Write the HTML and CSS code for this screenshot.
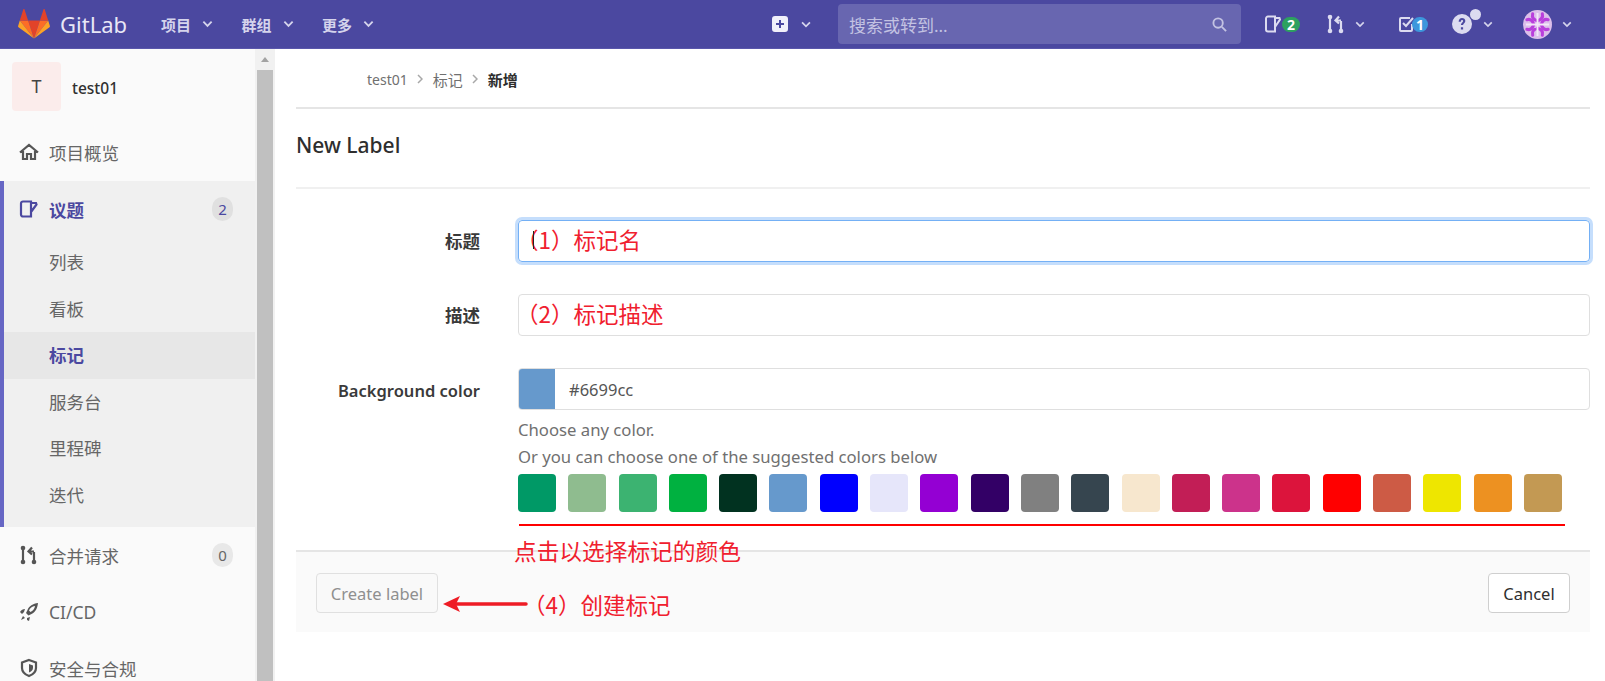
FILE: index.html
```html
<!DOCTYPE html>
<html lang="zh">
<head>
  <meta charset="UTF-8">
  <title>New Label - test01</title>
  <link rel="stylesheet" href="styles.css">
</head>
<body>

<header class="navbar">
  <div class="nav-left">
    <svg class="logo" viewBox="0 0 32 30" width="32" height="30">
      <path fill="#e24329" d="M16 29.5l5.9-18.1H10.1z"/>
      <path fill="#fc6d26" d="M16 29.5L10.1 11.4H1.8z"/>
      <path fill="#fca326" d="M1.8 11.4L.1 16.9c-.2.5 0 1 .4 1.3L16 29.5z"/>
      <path fill="#e24329" d="M1.8 11.4h8.3L6.5.4c-.2-.5-1-.5-1.2 0z"/>
      <path fill="#fc6d26" d="M16 29.5l5.9-18.1h8.3z"/>
      <path fill="#fca326" d="M30.2 11.4l1.7 5.5c.2.5 0 1-.4 1.3L16 29.5z"/>
      <path fill="#e24329" d="M30.2 11.4h-8.3l3.6-11c.2-.5 1-.5 1.2 0z"/>
    </svg>
    <span class="brand">GitLab</span>
    <a class="nav-link">项目<svg class="caret" viewBox="0 0 12 8"><path d="M1.5 1.5L6 6l4.5-4.5"/></svg></a>
    <a class="nav-link">群组<svg class="caret" viewBox="0 0 12 8"><path d="M1.5 1.5L6 6l4.5-4.5"/></svg></a>
    <a class="nav-link">更多<svg class="caret" viewBox="0 0 12 8"><path d="M1.5 1.5L6 6l4.5-4.5"/></svg></a>
  </div>
  <div class="nav-right">
    <div class="nav-icon new-btn">
      <svg viewBox="0 0 16 16" width="16" height="16"><path fill="#f1f0fa" fill-rule="evenodd" d="M3 0h10a3 3 0 0 1 3 3v10a3 3 0 0 1-3 3H3a3 3 0 0 1-3-3V3a3 3 0 0 1 3-3zm4 4v3H4v2h3v3h2V9h3V7H9V4z"/></svg>
      <svg class="caret small" viewBox="0 0 12 8"><path d="M1.5 1.5L6 6l4.5-4.5"/></svg>
    </div>
    <div class="search">
      <span>搜索或转到...</span>
      <svg viewBox="0 0 16 16" width="15" height="15"><circle cx="6.5" cy="6.5" r="5" fill="none" stroke="#c3c2e2" stroke-width="2"/><path d="M10.5 10.5L15 15" stroke="#c3c2e2" stroke-width="2"/></svg>
    </div>
    <div class="nav-icon issues-icon">
      <svg viewBox="0 0 17 18" width="17" height="18"><path fill="none" stroke="#dcdbf0" stroke-width="2" d="M3 1.500h7v15H3a2 2 0 0 1-2-2v-11a2 2 0 0 1 2-2zM10 3h4.500l.5 1.500L10 12"/></svg>
      <span class="pill green">2</span>
    </div>
    <div class="nav-icon mr-icon">
      <svg viewBox="0 0 18 20" width="18" height="20"><g fill="none" stroke="#dcdbf0" stroke-width="2.200"><path d="M3 4v12M14 7v9M14 6.500H9.500M12 2.500L8.500 6.500 12 9.500"/></g><circle cx="3" cy="3" r="2.300" fill="#dcdbf0"/><circle cx="3" cy="17" r="2.300" fill="#dcdbf0"/><circle cx="14" cy="17" r="2.300" fill="#dcdbf0"/></svg>
      <svg class="caret small" viewBox="0 0 12 8"><path d="M1.5 1.5L6 6l4.5-4.5"/></svg>
    </div>
    <div class="nav-icon todo-icon">
      <svg viewBox="0 0 18 18" width="18" height="18"><path fill="none" stroke="#dcdbf0" stroke-width="2" d="M14 9v6a1 1 0 0 1-1 1H3a1 1 0 0 1-1-1V4a1 1 0 0 1 1-1h9M5 8l3 3 7-8"/></svg>
      <span class="pill blue">1</span>
    </div>
    <div class="nav-icon help-icon">
      <svg viewBox="0 0 18 18" width="20" height="20"><path fill="#dcdbf0" fill-rule="evenodd" d="M9 0a9 9 0 1 1 0 18A9 9 0 0 1 9 0zM8 12v2h2v-2zM6 7h2c0-1 .4-1.500 1-1.500s1 .4 1 1c0 1-2 1.500-2 3.500h2c0-1.500 2-2 2-3.700C12 4.500 10.700 3.500 9 3.500S6 4.800 6 7z"/></svg>
      <span class="help-dot"></span>
      <svg class="caret small" viewBox="0 0 12 8"><path d="M1.5 1.5L6 6l4.500-4.500"/></svg>
    </div>
    <div class="nav-icon user-icon">
      <svg viewBox="0 0 30 30" width="29" height="29">
        <circle cx="15" cy="15" r="15" fill="#dcbfea"/>
        <g fill="none" stroke="#b93fdc" stroke-width="3.200" stroke-linecap="round">
          <path d="M4 10c4-1 6 1 7 5M26 10c-4-1-6 1-7 5M4 20c4 1 6-1 7-5M26 20c-4 1-6-1-7-5"/>
          <path d="M10 4c-1 4 1 6 5 7M20 4c1 4-1 6-5 7M10 26c-1-4 1-6 5-7M20 26c1-4-1-6-5-7"/>
        </g>
        <path d="M15 3v24M3 15h24" stroke="#f3e6f8" stroke-width="2"/>
      </svg>
      <svg class="caret small" viewBox="0 0 12 8"><path d="M1.5 1.5L6 6l4.500-4.500"/></svg>
    </div>
  </div>
</header>

<div class="layout">
  <aside class="sidebar">
    <div class="project">
      <div class="project-avatar">T</div>
      <div class="project-name">test01</div>
    </div>
    <a class="side-item">
      <svg viewBox="0 0 20 18" width="20" height="18"><path fill="none" stroke="#555" stroke-width="2.200" d="M1 9.500L10 2l9 7.500M4 8v8h4v-5h4v5h4V8"/></svg>
      <span>项目概览</span>
    </a>
    <div class="side-group">
      <a class="side-item active-head">
        <svg viewBox="0 0 20 18" width="20" height="18"><path fill="none" stroke="#4b48a0" stroke-width="2.200" d="M4 1.500h8v15H4a2 2 0 0 1-2-2v-11a2 2 0 0 1 2-2zM12 3h5l.5 1.500L12 12"/></svg>
        <span>议题</span>
        <em class="count dark">2</em>
      </a>
      <a class="sub-item">列表</a>
      <a class="sub-item">看板</a>
      <a class="sub-item current">标记</a>
      <a class="sub-item">服务台</a>
      <a class="sub-item">里程碑</a>
      <a class="sub-item">迭代</a>
    </div>
    <a class="side-item merge">
      <svg viewBox="0 0 20 20" width="20" height="20"><g fill="none" stroke="#555" stroke-width="2.200"><path d="M4 4v12M15 7v9M15 6.500h-4.500M13 2.500L9.500 6.500 13 9.500"/></g><circle cx="4" cy="3" r="2.300" fill="#555"/><circle cx="4" cy="17" r="2.300" fill="#555"/><circle cx="15" cy="17" r="2.300" fill="#555"/></svg>
      <span>合并请求</span>
      <em class="count">0</em>
    </a>
    <a class="side-item">
      <svg viewBox="0 0 20 20" width="20" height="20"><g fill="#555"><path d="M19 1c-5 .5-9 3-10.500 7L7 11l2.500 2.500 3-1.500C16.500 10 18.500 6 19 1zm-3 3c-.2 2-1.500 4.500-4.500 6L10 8.500C11 6 13 4.500 16 4z"/><path d="M1 10c1-2 3-3 5-3l-1 3-2 2zM4 14l2 2-4 2z"/><path d="M8 16l3-1-1 4-2-1z"/></g></svg>
      <span>CI/CD</span>
    </a>
    <a class="side-item">
      <svg viewBox="0 0 20 20" width="20" height="20"><path fill="none" stroke="#555" stroke-width="2.200" d="M10 2l7 2.500V10c0 4-3 6.500-7 8-4-1.500-7-4-7-8V4.500z"/><path fill="#555" d="M10 6l4 1.500V10c0 2-2 3.500-4 4.500z"/></svg>
      <span>安全与合规</span>
    </a>
  </aside>
  <div class="scrollbar">
    <div class="scroll-up"></div>
    <div class="scroll-thumb"></div>
  </div>

  <main class="content">
    <nav class="breadcrumb">
      <a class="crumb-first">test01</a>
      <svg class="crumb-sep" viewBox="0 0 6 10"><path d="M1 1l4 4-4 4"/></svg>
      <a>标记</a>
      <svg class="crumb-sep" viewBox="0 0 6 10"><path d="M1 1l4 4-4 4"/></svg>
      <strong>新增</strong>
    </nav>
    <h3 class="page-title">New Label</h3>
    <form class="label-form">
      <div class="form-row">
        <label>标题</label>
        <div class="field focused"><i class="cursor"></i><span class="note">（1）标记名</span></div>
      </div>
      <div class="form-row">
        <label>描述</label>
        <div class="field"><span class="note">（2）标记描述</span></div>
      </div>
      <div class="form-row color-row">
        <label class="latin">Background color</label>
        <div class="color-col">
          <div class="color-input">
            <span class="color-preview"></span>
            <span class="color-value">#6699cc</span>
          </div>
          <p class="help">Choose any color.<br>Or you can choose one of the suggested colors below</p>
          <div class="swatches">
            <span style="background:#009966"></span>
            <span style="background:#8fbc8f"></span>
            <span style="background:#3cb371"></span>
            <span style="background:#00b140"></span>
            <span style="background:#013220"></span>
            <span style="background:#6699cc"></span>
            <span style="background:#0000ff"></span>
            <span style="background:#e6e6fa"></span>
            <span style="background:#9400d3"></span>
            <span style="background:#330066"></span>
            <span style="background:#808080"></span>
            <span style="background:#36454f"></span>
            <span style="background:#f7e7ce"></span>
            <span style="background:#c21e56"></span>
            <span style="background:#cc338b"></span>
            <span style="background:#dc143c"></span>
            <span style="background:#ff0000"></span>
            <span style="background:#cd5b45"></span>
            <span style="background:#eee600"></span>
            <span style="background:#ed9121"></span>
            <span style="background:#c39953"></span>
          </div>
          <div class="red-line"></div>
        </div>
      </div>
      <div class="form-actions">
        <button type="button" class="btn disabled">Create label</button>
        <div class="arrow-note">
          <svg viewBox="0 0 86 20" width="86" height="20"><path d="M84 10H14" stroke="#ee1c25" stroke-width="3.500" stroke-linecap="round"/><path d="M1 10l17-8-4 8 4 8z" fill="#ee1c25"/></svg>
          <span class="note">（4）创建标记</span>
        </div>
        <button type="button" class="btn cancel">Cancel</button>
      </div>
      <span class="note color-note">点击以选择标记的颜色</span>
    </form>
  </main>
</div>

</body>
</html>
```

FILE: styles.css
```css
* {
  box-sizing: border-box;
}

html, body {
  height: 681px;
  margin: 0;
  overflow: hidden;
}

body {
  font-family: "Noto Sans", "Noto Sans CJK SC", sans-serif;
  font-size: 14px;
  color: #2e2e2e;
  background: #fff;
}

/* top bar */
.navbar {
  height: 49px;
  background: #4b48a0;
  border-bottom: 1px solid #5a57ab;
  display: flex;
  justify-content: space-between;
  align-items: center;
}

.nav-left {
  display: flex;
  align-items: center;
  padding-left: 18px;
}

.logo {
  margin-right: 10px;
}

.brand {
  color: #e8e7f6;
  font-size: 22px;
  margin-right: 34px;
  width: 67px;
}

.nav-link {
  color: #d5d4ec;
  font-weight: 700;
  font-size: 15px;
  display: flex;
  align-items: center;
  margin-right: 28.500px;
}

.caret {
  width: 11px;
  height: 8px;
  margin-left: 11px;
  fill: none;
  stroke: #d5d4ec;
  stroke-width: 2;
}

.caret.small {
  width: 10px;
  height: 7px;
  margin-left: 10px;
}

.nav-right {
  display: flex;
  align-items: center;
  height: 100%;
  padding-right: 33px;
}

.nav-icon {
  display: flex;
  align-items: center;
  position: relative;
}

.new-btn {
  margin-right: 26px;
}

.new-btn .caret {
  margin-left: 12px;
  width: 12px;
}

.search {
  width: 403px;
  height: 40px;
  background: #6866b0;
  border-radius: 4px;
  color: #c3c2e2;
  font-size: 17px;
  display: flex;
  align-items: center;
  justify-content: space-between;
  padding: 0 14px 0 11px;
  margin-right: 24px;
}

.issues-icon {
  margin-right: 27px;
}

.mr-icon {
  margin-right: 33px;
}

.todo-icon {
  margin-right: 24px;
}

.help-icon {
  margin-right: 30px;
}

.help-icon .caret {
  margin-left: 11px;
}

.pill {
  color: #fff;
  font-size: 14px;
  font-weight: 700;
  line-height: 15px;
  height: 15px;
  border-radius: 8px;
  text-align: center;
}

.pill.green {
  background: #2da160;
  width: 18px;
  margin-left: 0;
}

.pill.blue {
  background: #3d97dc;
  width: 16px;
  margin-left: -4px;
}

.help-dot {
  position: absolute;
  left: 18px;
  top: -5px;
  width: 11px;
  height: 11px;
  border-radius: 50%;
  background: #dcdbf0;
}

/* page body */
.layout {
  display: flex;
  height: 632px;
}

.sidebar {
  width: 255px;
  background: #fafafa;
  flex-shrink: 0;
  overflow: hidden;
}

.project {
  display: flex;
  align-items: flex-start;
  padding: 13px 12px 0;
  height: 76px;
}

.project-avatar {
  width: 49px;
  height: 49px;
  border-radius: 4px;
  background: #fbeceb;
  text-align: center;
  line-height: 49px;
  font-size: 18px;
  color: #444;
}

.project-name {
  margin-left: 11px;
  font-size: 15.500px;
  font-weight: 500;
  line-height: 53px;
  color: #303030;
}

.side-item {
  display: flex;
  align-items: center;
  height: 56px;
  padding: 0 22px 2px 19px;
  color: #666;
  font-size: 17.500px;
}

.side-item svg {
  margin-right: 10px;
  flex-shrink: 0;
}

.side-item span {
  flex: 1;
}

.side-group {
  background: #f0f0f0;
  border-left: 4px solid #6666c4;
  height: 346px;
}

.active-head {
  padding-left: 15px;
  color: #4b48a0;
  font-weight: 700;
  height: 58px;
}

.sub-item {
  display: block;
  height: 46.500px;
  line-height: 46px;
  padding-left: 45px;
  color: #666;
  font-size: 17.500px;
}

.sub-item.current {
  background: #e7e7e7;
  color: #4b48a0;
  font-weight: 700;
}

.count {
  font-style: normal;
  font-weight: 400;
  font-size: 15px;
  width: 21px;
  height: 24px;
  line-height: 24px;
  text-align: center;
  border-radius: 12px;
  background: #e8e8e8;
  color: #666;
}

.count.dark {
  background: #e0e0e0;
  color: #4b48a0;
}

.merge {
  height: 58px;
}

.scrollbar {
  width: 20px;
  background: #f1f1f1;
  flex-shrink: 0;
  padding: 0 2px;
}

.scroll-up {
  height: 21px;
  position: relative;
}

.scroll-up::after {
  content: "";
  position: absolute;
  left: 4px;
  top: 8px;
  border-left: 4px solid transparent;
  border-right: 4px solid transparent;
  border-bottom: 5px solid #a3a3a3;
}

.scroll-thumb {
  height: 612px;
  background: #c0c0c0;
}

/* main */
.content {
  flex: 1;
  padding: 0 15px 0 21px;
}

.breadcrumb {
  height: 60px;
  border-bottom: 2px solid #e5e5e5;
  display: flex;
  align-items: center;
  padding: 2px 0 0 71px;
  color: #707070;
  font-size: 15px;
}

.crumb-first {
  font-size: 14px;
}

.breadcrumb strong {
  color: #2e2e2e;
}

.crumb-sep {
  width: 6px;
  height: 10px;
  margin: 0 10px 0 9px;
  fill: none;
  stroke: #a8a8a8;
  stroke-width: 1.500;
}

.page-title {
  margin: 0;
  height: 80px;
  line-height: 72px;
  font-size: 21px;
  font-weight: 500;
  color: #2e2e2e;
  border-bottom: 2px solid #f0f0f0;
}

.label-form {
  position: relative;
  padding-top: 31px;
}

.form-row {
  display: flex;
  align-items: center;
  height: 42px;
  margin-bottom: 32px;
}

.form-row label {
  width: 184px;
  text-align: right;
  font-weight: 700;
  font-size: 17.500px;
  color: #3a3a3a;
  margin-right: 38px;
  padding-bottom: 2px;
  flex-shrink: 0;
}

.form-row label.latin {
  font-size: 16.500px;
  font-weight: 600;
  padding-bottom: 0;
}

.field {
  flex: 1;
  height: 42px;
  border: 1px solid #dfdfdf;
  border-radius: 4px;
  display: flex;
  align-items: center;
  position: relative;
}

.field.focused {
  border: 1px solid #74b0f5;
  box-shadow: 0 0 0 3px #c5defc;
}

.field .note {
  margin: 0 0 4px -3px;
}

.cursor {
  position: absolute;
  left: 14px;
  top: 10px;
  width: 1px;
  height: 18px;
  background: #222;
}

.note {
  color: #f0202e;
  font-size: 22.500px;
  font-family: "Noto Sans CJK SC", "Noto Sans", sans-serif;
  line-height: 1;
}

.color-row {
  display: flex;
  height: auto;
  align-items: flex-start;
  margin-bottom: 0;
}

.color-row label {
  line-height: 42px;
  padding-top: 2px;
}

.color-col {
  flex: 1;
  min-width: 0;
}

.color-input {
  height: 42px;
  border: 1px solid #dfdfdf;
  border-radius: 4px;
  display: flex;
  align-items: center;
  overflow: hidden;
}

.color-preview {
  width: 36px;
  height: 100%;
  background: #6699cc;
}

.color-value {
  margin-left: 14px;
  font-size: 16.500px;
  color: #555;
}

.help {
  margin: 6px 0 4px;
  font-size: 16.700px;
  line-height: 27px;
  color: #707070;
}

.swatches {
  display: flex;
  gap: 12.300px;
}

.swatches span {
  width: 38px;
  height: 38px;
  border-radius: 4px;
  flex-shrink: 0;
}

.red-line {
  height: 2px;
  background: #f00;
  margin: 12px 25px 0 1px;
}

.form-actions {
  margin-top: 24px;
  height: 82px;
  background: #fafafa;
  border-top: 2px solid #e5e5e5;
  display: flex;
  align-items: flex-start;
  padding: 21px 20px 0;
}

.btn {
  height: 40px;
  border-radius: 4px;
  font: inherit;
  font-size: 16.500px;
  background: #fff;
  border: 1px solid #cfcfcf;
  color: #2e2e2e;
  padding: 0;
  width: 82px;
}

.btn.disabled {
  background: #f9f9f9;
  border-color: #e0e0e0;
  color: #8f8f8f;
  width: 122px;
}

.btn.cancel {
  margin-left: auto;
}

.arrow-note {
  display: flex;
  align-items: center;
  margin: 20px 0 0 4px;
}

.arrow-note .note {
  margin-left: -5px;
}

.color-note {
  position: absolute;
  left: 218px;
  top: 351px;
  font-size: 22.700px;
}
```
